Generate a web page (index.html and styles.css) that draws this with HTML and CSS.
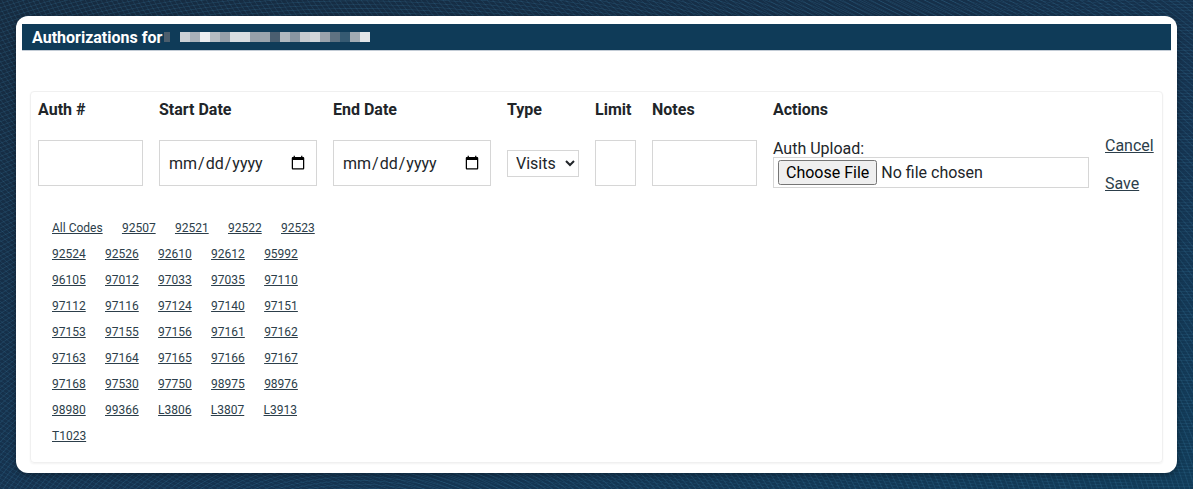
FILE: index.html
```html
<!DOCTYPE html>
<html lang="en">
<head>
<meta charset="utf-8">
<title>Authorizations</title>
<link rel="stylesheet" href="styles.css">
</head>
<body>
<div class="card">
  <div class="titlebar">
    <span class="title">Authorizations for</span>
    <span class="redact">
      <i class="p1 sm"></i><i class="gap"></i>
      <i class="c1"></i><i class="c2"></i><i class="c3"></i><i class="c4"></i><i class="c5"></i><i class="c6"></i><i class="c6"></i><i class="c5"></i><i class="c7"></i><i class="c8"></i><i class="c9"></i><i class="c10"></i><i class="c11"></i><i class="c12"></i><i class="c13"></i><i class="c14"></i><i class="c15"></i><i class="c16"></i><i class="c17"></i>
    </span>
  </div>
  <div class="panel">
    <div class="formgrid">
      <div class="lbl">Auth #</div>
      <div class="lbl">Start Date</div>
      <div class="lbl">End Date</div>
      <div class="lbl">Type</div>
      <div class="lbl">Limit</div>
      <div class="lbl">Notes</div>
      <div class="lbl">Actions</div>
      <div></div>

      <div class="cell"><input class="box" type="text"></div>
      <div class="cell"><input class="box date" type="date"></div>
      <div class="cell"><input class="box date" type="date"></div>
      <div class="cell"><select class="sel"><option>Visits</option></select></div>
      <div class="cell"><input class="box" type="text"></div>
      <div class="cell"><input class="box" type="text"></div>
      <div class="upload">
        <div class="uplabel">Auth Upload:</div>
        <input class="file" type="file">
      </div>
      <div class="actions">
        <a href="#">Cancel</a>
        <a href="#">Save</a>
      </div>
    </div>
    <div class="codes">
      <a href="#">All Codes</a><a href="#">92507</a><a href="#">92521</a><a href="#">92522</a><a href="#">92523</a>
      <a href="#">92524</a><a href="#">92526</a><a href="#">92610</a><a href="#">92612</a><a href="#">95992</a>
      <a href="#">96105</a><a href="#">97012</a><a href="#">97033</a><a href="#">97035</a><a href="#">97110</a>
      <a href="#">97112</a><a href="#">97116</a><a href="#">97124</a><a href="#">97140</a><a href="#">97151</a>
      <a href="#">97153</a><a href="#">97155</a><a href="#">97156</a><a href="#">97161</a><a href="#">97162</a>
      <a href="#">97163</a><a href="#">97164</a><a href="#">97165</a><a href="#">97166</a><a href="#">97167</a>
      <a href="#">97168</a><a href="#">97530</a><a href="#">97750</a><a href="#">98975</a><a href="#">98976</a>
      <a href="#">98980</a><a href="#">99366</a><a href="#">L3806</a><a href="#">L3807</a><a href="#">L3913</a>
      <a href="#">T1023</a>
    </div>
  </div>
</div>
</body>
</html>
```
FILE: styles.css
```css
html, body {
  margin: 0;
  height: 100%;
}
body {
  font-family: Roboto, "Liberation Sans", sans-serif;
  background-color: #15304a;
  background-image:
    repeating-radial-gradient(ellipse at 30% 130%, rgba(60,120,160,0) 0px, rgba(60,120,160,0) 3px, rgba(60,130,170,0.22) 4px, rgba(60,120,160,0) 5px),
    repeating-radial-gradient(ellipse at 100% -40%, rgba(60,120,160,0) 0px, rgba(60,120,160,0) 3px, rgba(60,130,170,0.18) 4px, rgba(60,120,160,0) 5px),
    linear-gradient(160deg, #162b40 0%, #153350 60%, #113b58 100%);
  overflow: hidden;
}
.card {
  margin: 16px;
  height: 457px;
  box-sizing: border-box;
  background: #ffffff;
  border-radius: 12px;
  padding: 8px 6px 10px 6px;
  display: flex;
  flex-direction: column;
  box-shadow: 0 2px 6px rgba(0,0,0,0.35);
}
.titlebar {
  height: 27px;
  box-sizing: border-box;
  background: #0f3b58;
  border-bottom: 1px solid #c3ccd6;
  display: flex;
  align-items: center;
  padding-left: 10px;
}
.title {
  color: #ffffff;
  font-weight: 700;
  font-size: 16px;
}
.redact {
  display: flex;
  margin-left: 2px;
  height: 10px;
}
.redact i { display: block; width: 10px; height: 10px; }
.redact i.sm { width: 6px; }
.redact i.gap { width: 10px; }
.p1 { background: #4c5e6d; }
.c1 { background: #ccd1d6; }
.c2 { background: #a9b1b9; }
.c3 { background: #eceef0; }
.c4 { background: #b6bcc2; }
.c5 { background: #97a0a9; }
.c6 { background: #d9dde1; }
.c7 { background: #9aa4ad; }
.c8 { background: #4a5e70; }
.c9 { background: #b0b8bf; }
.c10 { background: #8a96a2; }
.c11 { background: #c6cbd0; }
.c12 { background: #d2d6da; }
.c13 { background: #9aa3ac; }
.c14 { background: #5f7282; }
.c15 { background: #365a72; }
.c16 { background: #a2abb3; }
.c17 { background: #e2e5e8; }

.panel {
  margin: 40px 8px 0 8px;
  flex: 1;
  border: 1px solid #f0f0f0;
  border-radius: 4px;
  box-shadow: 0 1px 2px rgba(0,0,0,0.05);
  padding: 0 7px;
}
.formgrid {
  display: grid;
  grid-template-columns: 105px 158px 158px 72px 41px 105px 316px 1fr;
  column-gap: 16px;
  align-items: start;
}
.lbl {
  font-size: 16px;
  font-weight: 700;
  color: #212529;
  padding-top: 8px;
  height: 19px;
  line-height: 19px;
  margin-bottom: 21px;
}
.box {
  display: block;
  width: 100%;
  height: 46px;
  box-sizing: border-box;
  border: 1px solid #d6d6d6;
  border-radius: 0;
  font-family: Roboto, "Liberation Sans", sans-serif;
  font-size: 16px;
  color: #212529;
  padding: 0 8px;
  margin: 0;
  background: #fff;
}
.sel {
  display: block;
  width: 72px;
  height: 27px;
  margin-top: 10px;
  box-sizing: border-box;
  border: 1px solid #d6d6d6;
  border-radius: 0;
  background: #fff;
  font-family: Roboto, "Liberation Sans", sans-serif;
  font-size: 16px;
  color: #212529;
  padding: 0 4px;
}
.uplabel {
  font-size: 16px;
  color: #212529;
  line-height: 17px;
}
.file {
  display: block;
  width: 316px;
  height: 31px;
  box-sizing: border-box;
  border: 1px solid #d6d6d6;
  padding: 2px 4px;
  font-family: Roboto, "Liberation Sans", sans-serif;
  font-size: 16px;
  color: #212529;
  background: #fff;
}
.file::file-selector-button {
  font-family: Roboto, "Liberation Sans", sans-serif;
  font-size: 16px;
}
.actions {
  display: flex;
  flex-direction: column;
  row-gap: 19px;
  margin-top: -4px;
}
.actions a {
  font-size: 16px;
  color: #2c3e4a;
  text-decoration: underline;
  line-height: 19px;
}
.codes {
  margin: 28px 0 0 14px;
  width: 282px;
  display: flex;
  flex-wrap: wrap;
  column-gap: 19.3px;
  row-gap: 12px;
}
.codes a {
  font-size: 12px;
  line-height: 14px;
  color: #2c3e4a;
  text-decoration: underline;
}
```
